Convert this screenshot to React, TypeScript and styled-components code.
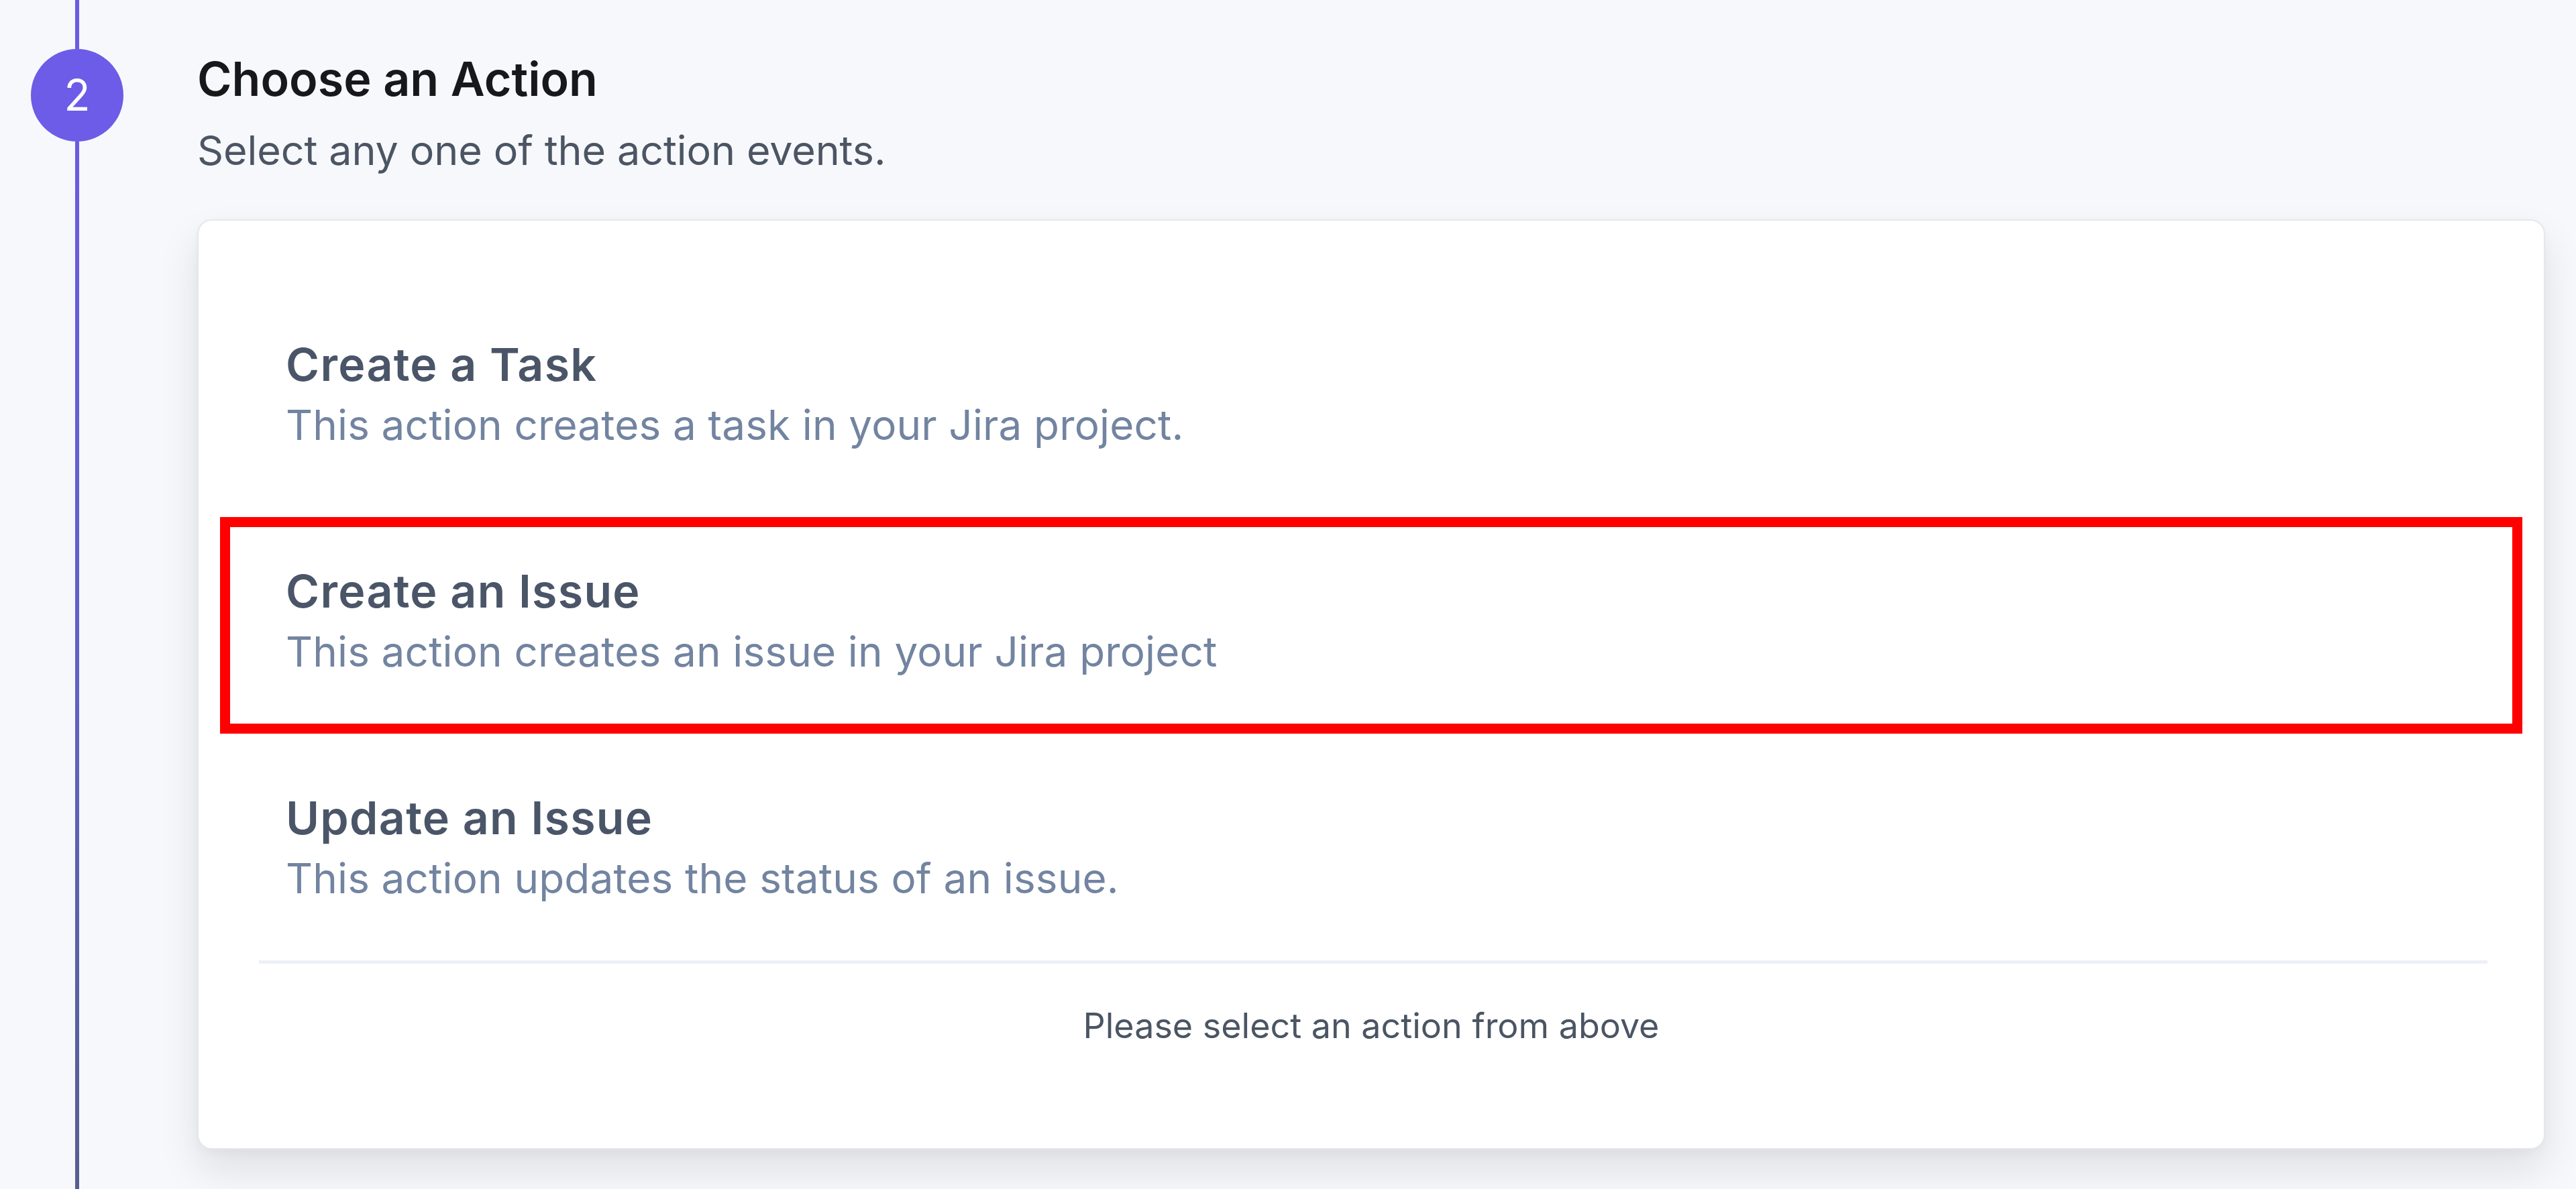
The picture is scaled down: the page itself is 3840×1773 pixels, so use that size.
import React from "react";
import styled, { createGlobalStyle } from "styled-components";

const GlobalStyle = createGlobalStyle`
  html, body {
    margin: 0;
    padding: 0;
    background: #f7f8fb;
  }
  body {
    font-family: Inter, "Noto Sans", "Liberation Sans", sans-serif;
  }
  * { box-sizing: border-box; }
`;

const Page = styled.div`
  display: flex;
  min-height: 100vh;
  height: 1773px;
  overflow: hidden;
  background: #f7f8fb;
  padding-right: 46px;
`;

const Rail = styled.div`
  width: 230px;
  flex: none;
  display: flex;
  flex-direction: column;
  align-items: center;
`;

const RailLine = styled.div<{ $grow?: boolean; $top?: boolean }>`
  width: 6px;
  flex: ${(p) => (p.$grow ? "1 1 auto" : "none")};
  height: ${(p) => (p.$grow ? "auto" : "73px")};
  background: ${(p) =>
    p.$top ? "#6a5be3" : "linear-gradient(to bottom, #6a5be3 0%, #5f63c4 50%, #55608f 100%)"};
`;

const StepCircle = styled.div`
  width: 138px;
  height: 138px;
  flex: none;
  border-radius: 50%;
  background: #6c5ce7;
  color: #ffffff;
  display: flex;
  align-items: center;
  justify-content: center;
  font-size: 64px;
  font-weight: 400;
  line-height: 1;
`;

const Content = styled.div`
  flex: 1;
  margin-left: 64px;
  padding-top: 76px;
  display: flex;
  flex-direction: column;
`;

const Title = styled.h2`
  margin: 0;
  font-size: 70px;
  line-height: 84px;
  font-weight: 600;
  color: #18181b;
`;

const Subtitle = styled.p`
  margin: 24px 0 0;
  font-size: 61px;
  line-height: 80px;
  font-weight: 400;
  letter-spacing: -0.1px;
  color: #4b5563;
`;

const Card = styled.div`
  margin-top: 63px;
  background: #ffffff;
  border: 2px solid #e6e7eb;
  border-radius: 22px;
  padding: 104px 32px 147px;
  box-shadow: 0 30px 60px rgba(17, 24, 39, 0.1), 0 6px 16px rgba(17, 24, 39, 0.03);
  display: flex;
  flex-direction: column;
`;

const ActionList = styled.div`
  display: flex;
  flex-direction: column;
  gap: 15px;
`;

const ActionItem = styled.div<{ $highlight?: boolean }>`
  border: 15px solid ${(p) => (p.$highlight ? "#ff0000" : "transparent")};
  padding: 55px 73px 67px 83px;
  display: flex;
  flex-direction: column;
  cursor: pointer;
`;

const ActionTitle = styled.div`
  font-size: 68px;
  line-height: 80px;
  font-weight: 600;
  letter-spacing: 1.3px;
  color: #4a5568;
`;

const ActionDesc = styled.div`
  margin-top: 11px;
  font-size: 62px;
  line-height: 80px;
  font-weight: 400;
  letter-spacing: 0.15px;
  color: #7284a0;
`;

const Divider = styled.div`
  height: 5px;
  background: #eef0f7;
  margin: 0 52px 0 58px;
`;

const Hint = styled.div`
  margin-top: 58px;
  text-align: center;
  font-size: 52px;
  line-height: 70px;
  color: #4b5563;
`;

const actions = [
  { title: "Create a Task", desc: "This action creates a task in your Jira project." },
  { title: "Create an Issue", desc: "This action creates an issue in your Jira project", highlight: true },
  { title: "Update an Issue", desc: "This action updates the status of an issue." },
];

export default function App() {
  return (
    <>
      <GlobalStyle />
      <Page>
        <Rail>
          <RailLine $top />
          <StepCircle>2</StepCircle>
          <RailLine $grow />
        </Rail>
        <Content>
          <Title>Choose an Action</Title>
          <Subtitle>Select any one of the action events.</Subtitle>
          <Card>
            <ActionList>
              {actions.map((a) => (
                <ActionItem key={a.title} $highlight={a.highlight}>
                  <ActionTitle>{a.title}</ActionTitle>
                  <ActionDesc>{a.desc}</ActionDesc>
                </ActionItem>
              ))}
            </ActionList>
            <Divider />
            <Hint>Please select an action from above</Hint>
          </Card>
        </Content>
      </Page>
    </>
  );
}
